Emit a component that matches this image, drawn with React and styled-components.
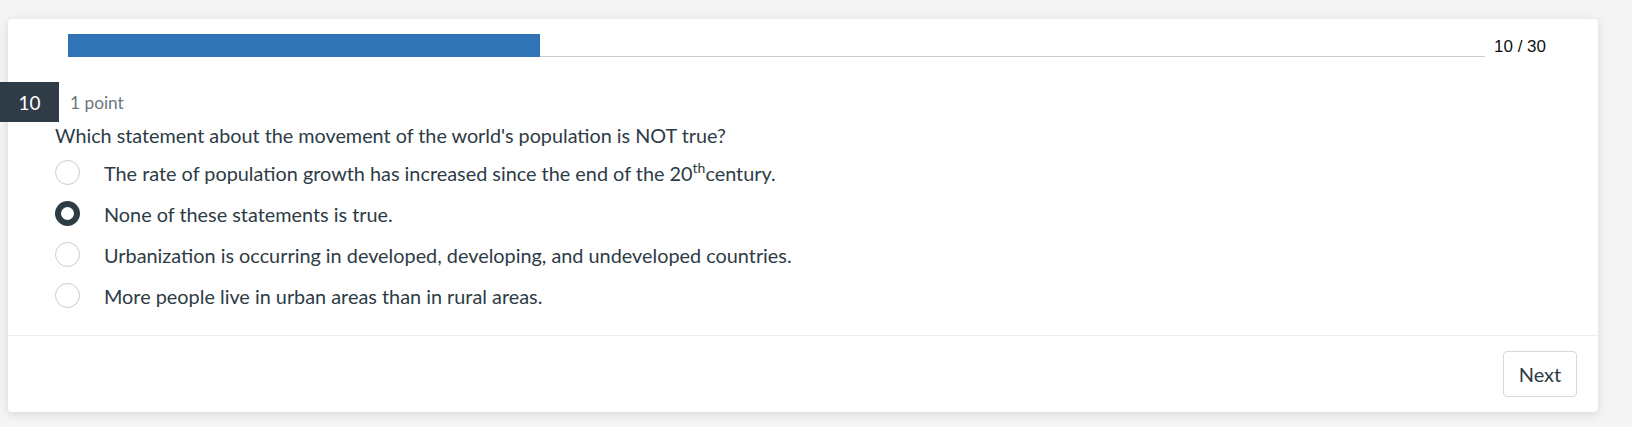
import styled, { createGlobalStyle } from "styled-components";

const GlobalStyle = createGlobalStyle`
  html, body {
    margin: 0;
    padding: 0;
    background: #f4f4f4;
    font-family: Lato, "Noto Sans", sans-serif;
    color: #2d3b45;
  }
`;

const QuizCard = styled.div`
  margin: 19px 34px 14px 8px;
  background: #fff;
  border-radius: 4px;
  box-shadow: 0 2px 10px rgba(0, 0, 0, 0.12);
  display: flex;
  flex-direction: column;
`;

const ProgressRow = styled.div`
  display: flex;
  align-items: flex-end;
  gap: 9px;
  padding: 15px 51px 0 60px;
  height: 23px;
`;

const ProgressTrack = styled.div`
  flex: 1;
  height: 23px;
  border-bottom: 1px solid #c7cdd1;
  box-sizing: border-box;
  display: flex;
`;

const ProgressFill = styled.div`
  height: 23px;
  background: #3174b5;
`;

const ProgressCount = styled.span`
  font-family: "Liberation Sans", Arial, sans-serif;
  font-size: 17px;
  color: #111;
  line-height: 19px;
  margin-bottom: 1px;
  width: 53px;
  white-space: nowrap;
`;

const QuestionBody = styled.div`
  padding: 25px 0 19px 47px;
`;

const QuestionHeader = styled.div`
  display: flex;
  align-items: center;
  gap: 11px;
  margin-left: -55px;
  height: 40px;
`;

const NumberBadge = styled.div`
  width: 59px;
  height: 40px;
  background: #2f3b46;
  color: #fff;
  font-size: 19px;
  display: flex;
  align-items: center;
  justify-content: center;
`;

const Points = styled.span`
  font-size: 17.3px;
  color: #6b7780;
`;

const QuestionText = styled.p`
  margin: 0 0 4px;
  font-size: 19.8px;
  line-height: 26px;
`;

const OptionList = styled.div`
  display: flex;
  flex-direction: column;
`;

const OptionRow = styled.label`
  display: flex;
  align-items: center;
  height: 41px;
  gap: 24px;
  font-size: 19.85px;
  cursor: pointer;

  sup {
    font-size: 14px;
    line-height: 0;
  }
`;

const Radio = styled.span`
  width: 25px;
  height: 25px;
  box-sizing: border-box;
  border-radius: 50%;
  flex-shrink: 0;
  background: #fff;
  border: ${(p) => (p.$checked ? "6px solid #2d3b45" : "1px solid #c7cdd1")};
`;

const Footer = styled.div`
  border-top: 1px solid #eceeef;
  display: flex;
  justify-content: flex-end;
  padding: 15px 21px 15px 0;
`;

const NextButton = styled.button`
  width: 74px;
  height: 46px;
  background: #fff;
  border: 1px solid #d5d9dc;
  border-radius: 4px;
  font-family: Lato, "Noto Sans", sans-serif;
  font-size: 20px;
  color: #2d3b45;
`;

const options = [
  {
    text: (
      <>
        The rate of population growth has increased since the end of the 20
        <sup>th</sup>century.
      </>
    ),
  },
  { text: "None of these statements is true.", checked: true },
  { text: "Urbanization is occurring in developed, developing, and undeveloped countries." },
  { text: "More people live in urban areas than in rural areas." },
];

const App = () => {
  const current = 10;
  const total = 30;
  return (
    <>
      <GlobalStyle />
      <QuizCard>
        <ProgressRow>
          <ProgressTrack>
            <ProgressFill style={{ width: `${(472 / 1417) * 100}%` }} />
          </ProgressTrack>
          <ProgressCount>
            {current} / {total}
          </ProgressCount>
        </ProgressRow>
        <QuestionBody>
          <QuestionHeader>
            <NumberBadge>{current}</NumberBadge>
            <Points>1 point</Points>
          </QuestionHeader>
          <QuestionText>
            Which statement about the movement of the world's population is NOT true?
          </QuestionText>
          <OptionList>
            {options.map((o, i) => (
              <OptionRow key={i}>
                <Radio $checked={o.checked} />
                <span>{o.text}</span>
              </OptionRow>
            ))}
          </OptionList>
        </QuestionBody>
        <Footer>
          <NextButton>Next</NextButton>
        </Footer>
      </QuizCard>
    </>
  );
};

export default App;
